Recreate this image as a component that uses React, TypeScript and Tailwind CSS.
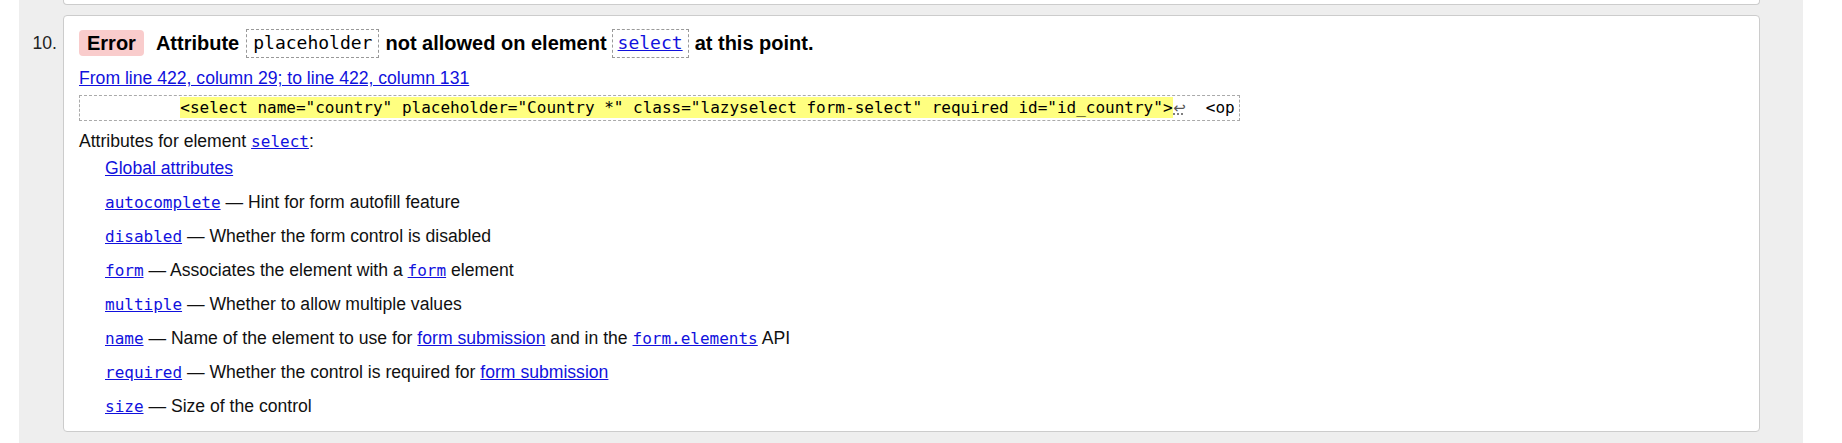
import React from 'react';

const mono = "font-['DejaVu_Sans_Mono',monospace]";

function CodeLink({ children }: { children: React.ReactNode }) {
  return (
    <a href="#" className="font-['DejaVu_Sans_Mono',monospace] text-[16px] leading-[16px] text-[#1111dd] underline">
      {children}
    </a>
  );
}

function Link({ children }: { children: React.ReactNode }) {
  return (
    <a href="#" className="text-[#1111dd] underline">
      {children}
    </a>
  );
}

const attributes: { name: string; desc: React.ReactNode }[] = [
  { name: 'autocomplete', desc: <> — Hint for form autofill feature</> },
  { name: 'disabled', desc: <> — Whether the form control is disabled</> },
  {
    name: 'form',
    desc: (
      <>
        {' '}— Associates the element with a <CodeLink>form</CodeLink> element
      </>
    ),
  },
  { name: 'multiple', desc: <> — Whether to allow multiple values</> },
  {
    name: 'name',
    desc: (
      <>
        {' '}— Name of the element to use for <Link>form submission</Link> and in the{' '}
        <CodeLink>form.elements</CodeLink> API
      </>
    ),
  },
  {
    name: 'required',
    desc: (
      <>
        {' '}— Whether the control is required for <Link>form submission</Link>
      </>
    ),
  },
  { name: 'size', desc: <> — Size of the control</> },
];

export default function App() {
  return (
    <div className="w-[1842px] h-[443px] bg-white flex font-['Liberation_Sans',Arial,sans-serif] text-[#111]">
      <div className="ml-[19px] w-[1784px] h-[443px] bg-[#eeeeee] flex flex-col">
        {/* bottom of previous message */}
        <div className="ml-[44px] mr-[43px] h-[5px] bg-white border-x border-b border-[#cccccc] rounded-b-[4px]" />

        <div className="mt-[10px] flex">
          <div className="w-[44px] pr-[6px] pt-[17px] text-right text-[17.6px] leading-[22px] text-[#222]">10.</div>

          <div className="flex-1 mr-[43px] h-[417px] bg-white border border-[#cccccc] rounded-[4px] pl-[15px] pt-[12px] flex flex-col items-start">
            <div className="flex items-center h-[30px] text-[20px] font-bold leading-[24px] text-black">
              <span className="h-[26px] px-[8px] flex items-center bg-[#f9cccc] rounded-[4px]">Error</span>
              <span className="ml-[12px]">Attribute</span>
              <code className="ml-[7px] h-[29px] px-[6px] flex items-center border border-dashed border-[#999999] font-['DejaVu_Sans_Mono',monospace] font-normal text-[18px]">
                placeholder
              </code>
              <span className="ml-[6px]">not allowed on element</span>
              <code className="ml-[5px] h-[29px] px-[5px] flex items-center border border-dashed border-[#999999] font-['DejaVu_Sans_Mono',monospace] font-normal text-[18px]">
                <a href="#" className="text-[#1111dd] underline">select</a>
              </code>
              <span className="ml-[6px]">at this point.</span>
            </div>

            <div className="mt-[9px] h-[22px] text-[17.6px] leading-[22px]">
              <Link>From line 422, column 29; to line 422, column 131</Link>
            </div>

            <div className={`mt-[6px] h-[26px] border border-dashed border-[#aaaaaa] px-[4px] leading-[24px] whitespace-pre text-[16px] text-black ${mono}`}>
              {'          '}
              <span className="bg-[#ffff80] py-[1px]">
                {'<select name="country" placeholder="Country *" class="lazyselect form-select" required id="id_country">'}
              </span>
              <span className="inline-block w-[14px] text-center font-['DejaVu_Sans',sans-serif] text-[15px] leading-[20px] text-[#555] underline decoration-dotted">↩</span>
              {'  <op'}
            </div>

            <div className="mt-[9px] h-[22px] text-[17.6px] leading-[22px]">
              Attributes for element <CodeLink>select</CodeLink>:
            </div>

            <div className="ml-[26px] flex flex-col text-[17.6px] leading-[22px]">
              <div className="mt-[5px] h-[22px]">
                <Link>Global attributes</Link>
              </div>
              {attributes.map((attr) => (
                <div key={attr.name} className="mt-[12px] h-[22px]">
                  <CodeLink>{attr.name}</CodeLink>
                  {attr.desc}
                </div>
              ))}
            </div>
          </div>
        </div>
      </div>
    </div>
  );
}
